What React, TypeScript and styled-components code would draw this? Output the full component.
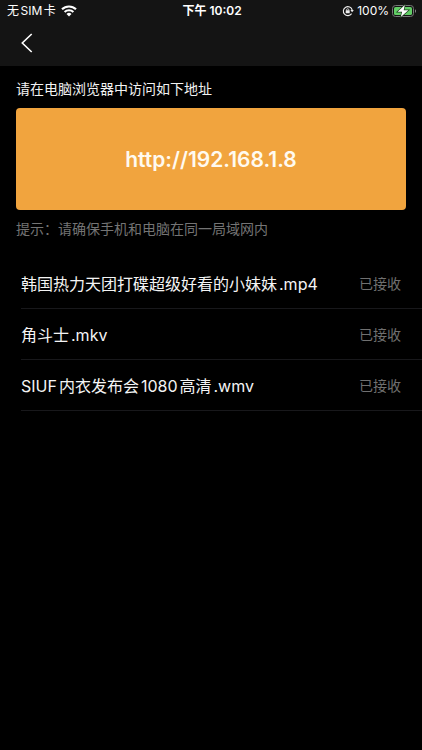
import React from "react";
import styled, { createGlobalStyle } from "styled-components";

const GlobalStyle = createGlobalStyle`
  * { box-sizing: border-box; }
  body {
    margin: 0;
    background: #000;
    color: #fff;
    font-family: Inter, "Noto Sans CJK SC", sans-serif;
    text-autospace: normal;
  }
`;

const Screen = styled.div`
  min-height: 100vh;
  background: #000;
`;

const TopBar = styled.header`
  padding-bottom: 2px;
  background: #141414;
`;

const StatusBar = styled.div`
  display: grid;
  grid-template-columns: 1fr auto 1fr;
  align-items: center;
  height: 22px;
  padding: 0 5px 0 7px;
  font-size: 12px;
  line-height: 22px;
  white-space: nowrap;
`;

const StatusGroup = styled.div<{ $end?: boolean }>`
  display: flex;
  align-items: center;
  gap: ${(p) => (p.$end ? "3px" : "5px")};
  justify-content: ${(p) => (p.$end ? "flex-end" : "flex-start")};
  svg { flex: none; display: block; }
`;

const Clock = styled.time`
  font-weight: 600;
`;

const NavBar = styled.nav`
  display: flex;
  align-items: center;
  height: 42px;
  padding: 0 12px;
`;

const BackButton = styled.button`
  display: flex;
  align-items: center;
  justify-content: center;
  width: 30px;
  height: 40px;
  padding: 0;
  border: 0;
  background: none;
  color: #fff;
  cursor: pointer;
`;

const Intro = styled.section`
  padding: 12px 16px 0;
`;

const Caption = styled.p<{ $muted?: boolean }>`
  margin: 0;
  font-size: 14px;
  line-height: 22px;
  color: ${(p) => (p.$muted ? "#747474" : "#f2f2f2")};
`;

const AddressCard = styled.a`
  display: flex;
  align-items: center;
  justify-content: center;
  height: 102px;
  margin: 8px 0;
  border-radius: 4px;
  background: #f1a43e;
  color: #fffaf0;
  font-size: 21px;
  font-weight: 600;
  text-decoration: none;
`;

const FileList = styled.ul`
  margin: 18px 0 0;
  padding: 0 0 0 21px;
  list-style: none;
`;

const FileRow = styled.li`
  display: flex;
  align-items: center;
  justify-content: space-between;
  gap: 16px;
  height: 51px;
  padding: 2px 21px 0 0;
  border-bottom: 1px solid #18181b;
`;

const FileName = styled.span`
  min-width: 0;
  color: #f4f4f4;
  font-size: 16px;
  line-height: 24px;
  white-space: nowrap;
`;

const FileState = styled.span`
  flex: none;
  color: #707070;
  font-size: 14px;
  line-height: 24px;
`;

const WifiIcon = () => (
  <svg width="16" height="12" viewBox="0 0 16 12" aria-hidden="true">
    <g fill="none" stroke="#fff" strokeWidth="2.1">
      <path d="M1 4.3a10 10 0 0 1 14 0" />
      <path d="M3.6 7a6.3 6.3 0 0 1 8.8 0" />
    </g>
    <path d="M8 11.6 5.5 9a3.6 3.6 0 0 1 5 0Z" fill="#fff" />
  </svg>
);

const RotationLockIcon = () => (
  <svg width="12" height="12" viewBox="0 0 12 12" aria-hidden="true">
    <path d="M9.6 8.6A4.5 4.5 0 1 1 10.2 5" fill="none" stroke="#eee" strokeWidth="1.1" />
    <path d="M8.4 5h3.4l-1.7 2.3Z" fill="#eee" />
    <rect x="3.7" y="5.3" width="4" height="3" rx=".5" fill="#eee" />
    <path d="M4.6 5.5v-.7a1.1 1.1 0 0 1 2.2 0v.7" fill="none" stroke="#eee" strokeWidth=".8" />
  </svg>
);

const BatteryIcon = () => (
  <svg width="25" height="14" viewBox="0 0 25 14" aria-hidden="true">
    <rect x=".5" y="1.5" width="21" height="11" rx="3" fill="none" stroke="#777" />
    <rect x="2" y="3" width="18" height="8" rx="1.6" fill="#62ce66" />
    <path d="M23 5.2c1.4.5 1.4 3.1 0 3.6Z" fill="#888" />
    <path
      d="M12.8 1 5.6 7.8h4.5L8.8 13l7.6-6.8h-4.7Z"
      fill="#fff"
      stroke="#1d3a1e"
      strokeWidth="1.4"
      paintOrder="stroke"
    />
  </svg>
);

const BackIcon = () => (
  <svg width="12" height="20" viewBox="0 0 12 20" aria-hidden="true">
    <path d="M10.7 1 1.3 10l9.4 9" fill="none" stroke="currentColor" strokeWidth="1.6" />
  </svg>
);

const files = [
  { name: "韩国热力天团打碟超级好看的小妹妹.mp4", state: "已接收" },
  { name: "角斗士.mkv", state: "已接收" },
  { name: "SIUF内衣发布会1080高清.wmv", state: "已接收" },
];

export default function App() {
  return (
    <Screen lang="zh-CN">
      <GlobalStyle />
      <TopBar>
        <StatusBar>
          <StatusGroup>
            <span>无SIM卡</span>
            <WifiIcon />
          </StatusGroup>
          <Clock>下午 10:02</Clock>
          <StatusGroup $end>
            <RotationLockIcon />
            <span>100%</span>
            <BatteryIcon />
          </StatusGroup>
        </StatusBar>
        <NavBar>
          <BackButton type="button" aria-label="返回">
            <BackIcon />
          </BackButton>
        </NavBar>
      </TopBar>
      <main>
        <Intro>
          <Caption>请在电脑浏览器中访问如下地址</Caption>
          <AddressCard href="http://192.168.1.8">http://192.168.1.8</AddressCard>
          <Caption $muted>提示：请确保手机和电脑在同一局域网内</Caption>
        </Intro>
        <FileList>
          {files.map((file) => (
            <FileRow key={file.name}>
              <FileName>{file.name}</FileName>
              <FileState>{file.state}</FileState>
            </FileRow>
          ))}
        </FileList>
      </main>
    </Screen>
  );
}
